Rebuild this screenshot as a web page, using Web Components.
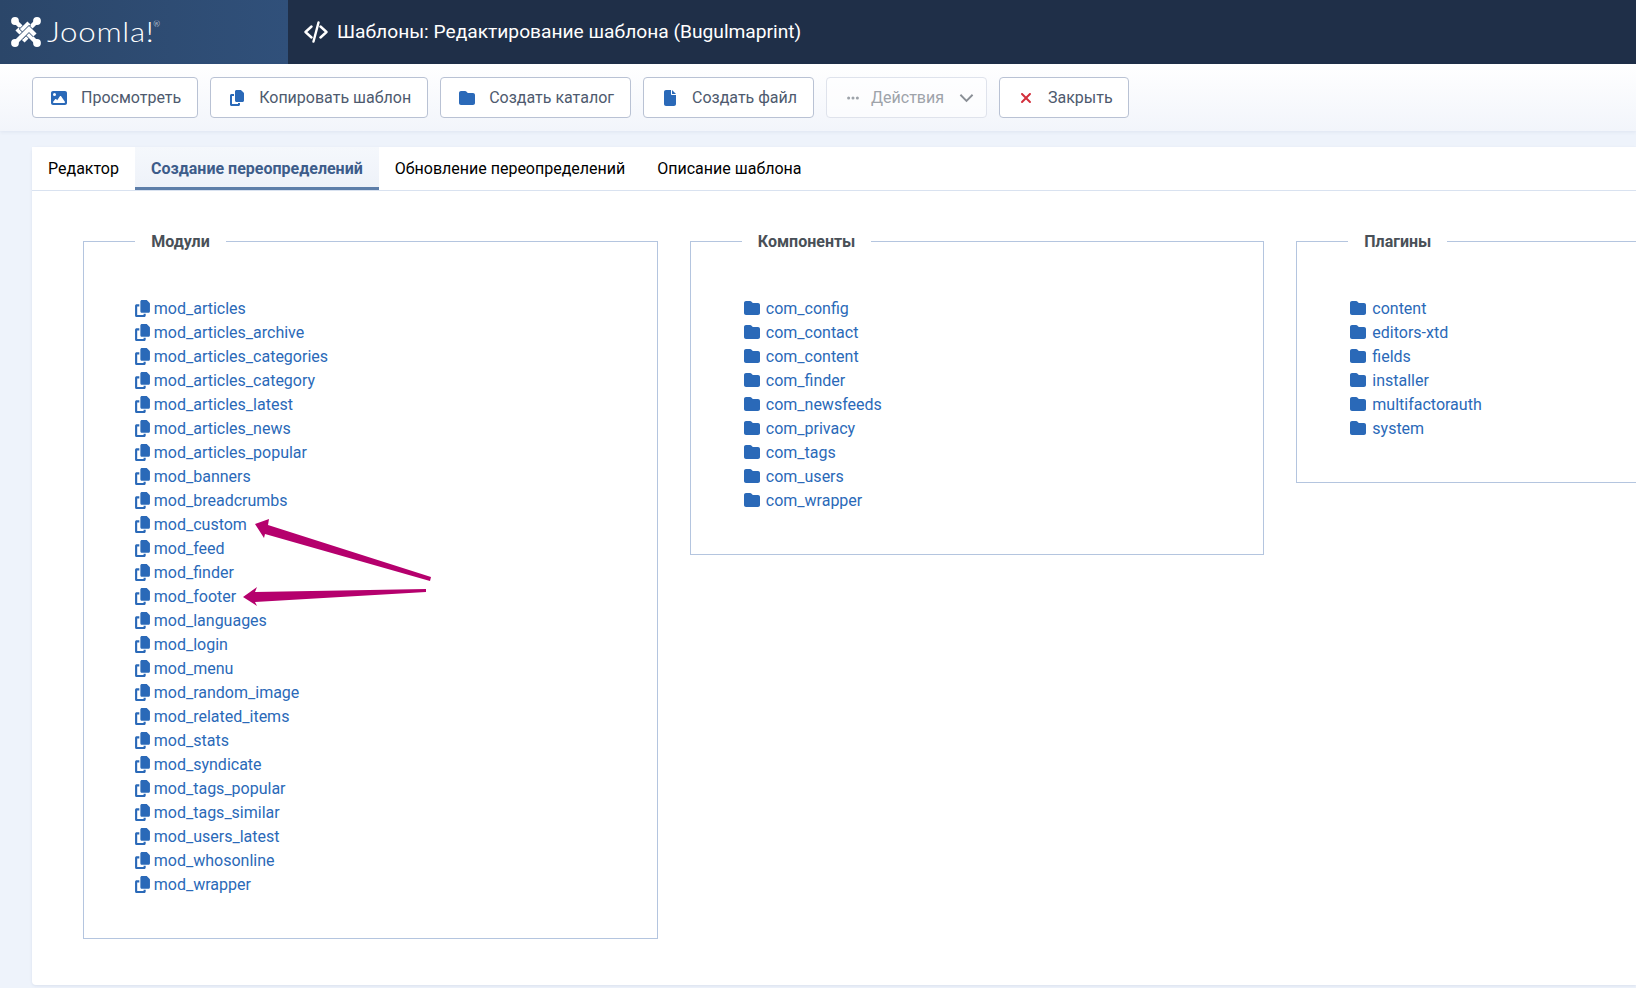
<!DOCTYPE html>
<html lang="ru">
<head>
<meta charset="utf-8">
<title>Шаблоны: Редактирование шаблона (Bugulmaprint)</title>
<style>
  html, body { margin: 0; height: 100%; overflow: hidden; }
  body { background: #eef3fb; font: 16px/24px Roboto, "Noto Sans", sans-serif; position: relative; }
</style>
</head>
<body>
<template-page></template-page>

<script>
const ICONS = {
  image: ['0 0 512 512', 'M0 96C0 60.7 28.7 32 64 32H448c35.3 0 64 28.7 64 64V416c0 35.3-28.7 64-64 64H64c-35.3 0-64-28.7-64-64V96zM323.8 202.5c-4.5-6.6-11.9-10.5-19.8-10.5s-15.4 3.9-19.8 10.5l-87 127.6L170.7 297c-4.6-5.7-11.5-9-18.7-9s-14.2 3.3-18.7 9l-64 80c-5.8 7.2-6.9 17.1-2.9 25.4s12.4 13.6 21.6 13.6h96 32H424c8.9 0 17.1-4.9 21.2-12.8s3.6-17.4-1.4-24.7l-120-176zM112 192a48 48 0 1 0 0-96 48 48 0 1 0 0 96z'],
  copy: ['0 0 448 512', 'M208 0H332.1c12.7 0 24.9 5.1 33.9 14.1l67.9 67.9c9 9 14.1 21.2 14.1 33.9V336c0 26.5-21.5 48-48 48H208c-26.5 0-48-21.5-48-48V48c0-26.5 21.5-48 48-48zM48 128h80v64H64V448H256V416h64v48c0 26.5-21.5 48-48 48H48c-26.5 0-48-21.5-48-48V176c0-26.5 21.5-48 48-48z'],
  folder: ['0 0 512 512', 'M64 480H448c35.3 0 64-28.7 64-64V160c0-35.3-28.7-64-64-64H288c-10.1 0-19.6-4.7-25.6-12.8L243.2 57.6C231.1 41.5 212.1 32 192 32H64C28.7 32 0 60.7 0 96V416c0 35.3 28.7 64 64 64z'],
  file: ['0 0 384 512', 'M0 64C0 28.7 28.7 0 64 0H224V128c0 17.7 14.3 32 32 32H384V448c0 35.3-28.7 64-64 64H64c-35.3 0-64-28.7-64-64V64zm384 64H256V0L384 128z'],
  close: ['0 0 384 512', 'M342.6 150.6c12.5-12.5 12.5-32.8 0-45.3s-32.8-12.5-45.3 0L192 210.7 86.6 105.4c-12.5-12.5-32.8-12.5-45.3 0s-12.5 32.8 0 45.3L146.7 256 41.4 361.4c-12.5 12.5-12.5 32.8 0 45.3s32.8 12.5 45.3 0L192 301.3 297.4 406.6c12.5 12.5 32.8 12.5 45.3 0s12.5-32.8 0-45.3L237.3 256 342.6 150.6z'],
  dots: ['0 0 448 512', 'M8 256a56 56 0 1 1 112 0A56 56 0 1 1 8 256zm160 0a56 56 0 1 1 112 0A56 56 0 1 1 168 256zm216-56a56 56 0 1 1 0 112 56 56 0 1 1 0-112z']
};

function icon(name, w, h) {
  const [box, d] = ICONS[name];
  return `<svg viewBox="${box}" width="${w}" height="${h || w}" fill="currentColor"><path d="${d}"/></svg>`;
}

class AppHeader extends HTMLElement {
  constructor() {
    super();
    const arm = 'M4 4L18 18L12 24';
    const rot = [0, 90, 180, 270].map(a => `
      <g transform="rotate(${a} 15 15)">
        <path d="${arm}" fill="none" stroke="#2d4a6f" stroke-width="5.800"/>
        <path d="${arm}" fill="none" stroke="#fff" stroke-width="4.400"/>
        <circle cx="4" cy="4" r="3.900" fill="#fff"/>
      </g>`).join('');
    this.attachShadow({mode: 'open'}).innerHTML = `
      <style>
        :host { display: flex; height: 64px; background: #1f2f48; color: #fff; }
        .logo { width: 288px; display: flex; align-items: center; padding-left: 11px; box-sizing: border-box;
                background: linear-gradient(90deg, #2b4669, #30507a); }
        .word { font: 300 27px/30px Lato, sans-serif; letter-spacing: .6px; margin-left: 6px;
                display: inline-block; transform: scaleX(1.16); transform-origin: left center; }
        .word sup { font-size: 7px; line-height: 0; vertical-align: 15px; letter-spacing: 0; margin-left: -1px; }
        .title { display: flex; align-items: center; padding-left: 16px; font-size: 19.200px; gap: 9px; }
      </style>
      <div class="logo">
        <svg viewBox="0 0 30 30" width="30" height="30">${rot}</svg>
        <span class="word">Joomla!<sup>®</sup></span>
      </div>
      <div class="title">
        <svg viewBox="0 0 24 24" width="24" height="24" fill="none" stroke="#fff" stroke-width="2.400" stroke-linecap="round" stroke-linejoin="round">
          <path d="M7.500 6.500L1.500 12l6 5.500M16.500 6.500l6 5.500-6 5.500M14.500 2.500L9.500 21.500"/>
        </svg>
        <slot></slot>
      </div>
    `;
  }
}

class ToolBar extends HTMLElement {
  constructor() {
    super();
    this.attachShadow({mode: 'open'}).innerHTML = `
      <style>
        :host { display: flex; gap: 12px; height: 67px; box-sizing: border-box; padding: 13px 32px 0;
                background: linear-gradient(180deg, #fff, #f2f5fb); box-shadow: 0 1px 4px rgba(40, 70, 120, .08);
                position: relative; }
      </style>
      <slot></slot>
    `;
  }
}

class ToolButton extends HTMLElement {
  constructor() {
    super();
    const name = this.getAttribute('icon');
    const color = this.getAttribute('color');
    const off = this.hasAttribute('disabled');
    const chevron = off ? `
      <svg class="chev" viewBox="0 0 16 10" width="15" height="10" fill="none" stroke="currentColor" stroke-width="2"><path d="M1.500 1.500L8 8l6.500-6.500"/></svg>` : '';
    this.attachShadow({mode: 'open'}).innerHTML = `
      <style>
        :host { display: inline-flex; align-items: center; height: 41px; box-sizing: border-box;
                padding: 0 ${off ? 12 : color ? 15 : 16}px 0 16px; background: ${off ? 'rgba(255,255,255,.6)' : '#fff'};
                border: 1px solid ${off ? '#dfe3ec' : '#b9c2d4'};
                border-radius: 4px; color: ${off ? '#9ea3aa' : '#4e5a6e'}; white-space: nowrap; }
        .ico { width: 20px; margin-right: ${off ? 8 : 12}px; display: flex; justify-content: center; color: ${off ? '#9ea3aa' : color || '#2a69b8'}; }
        .chev { margin-left: 15px; color: #8a8f96; }
        svg { display: block; }
      </style>
      <span class="ico">${icon(name, off ? 14 : 16)}</span><slot></slot>${chevron}
    `;
  }
}

class TabBar extends HTMLElement {
  constructor() {
    super();
    this.attachShadow({mode: 'open'}).innerHTML = `
      <style>
        :host { display: flex; height: 44px; box-sizing: border-box; border-bottom: 1px solid #d9e2f0; background: #fff; }
      </style>
      <slot></slot>
    `;
  }
}

class TabItem extends HTMLElement {
  constructor() {
    super();
    const on = this.hasAttribute('active');
    this.attachShadow({mode: 'open'}).innerHTML = `
      <style>
        :host { display: flex; align-items: center; padding: 0 16px; height: 43px; box-sizing: border-box; color: #000;
                ${on ? 'color: #3d5c8a; font-weight: 700; background: linear-gradient(180deg, #f5f8fc, #eef2f9); border-bottom: 3px solid #5d7ea9; padding-top: 3px;' : ''} }
      </style>
      <slot></slot>
    `;
  }
}

class OverrideGroup extends HTMLElement {
  constructor() {
    super();
    const name = this.getAttribute('icon');
    const copy = name === 'copy';
    const rows = this.getAttribute('items').split(' ').map(t =>
      `<li>${copy ? icon(name, 15, 17) : icon(name, 16)}<a>${t}</a></li>`).join('');
    this.attachShadow({mode: 'open'}).innerHTML = `
      <style>
        :host { display: block; }
        fieldset { margin: 0; padding: 43px 0 41px 50px; border: 1px solid #b4c5df; min-width: 0; }
        legend { margin-left: 1px; padding: 2px 16px 0; font-weight: 700; color: #495057; line-height: 24px; }
        ul { list-style: none; margin: 0; padding: 0; }
        li { display: flex; align-items: center; height: 24px; gap: ${copy ? 3.5 : 6}px; color: #2a69b8; margin-left: ${copy ? 1 : 3}px; }
        svg { display: block; flex: none; margin-bottom: 2px; }
        a { color: inherit; }
      </style>
      <fieldset>
        <legend>${this.getAttribute('legend')}</legend>
        <ul>${rows}</ul>
      </fieldset>
    `;
  }
}

class CalloutArrows extends HTMLElement {
  constructor() {
    super();
    this.attachShadow({mode: 'open'}).innerHTML = `
      <style>
        :host { position: absolute; left: 0; top: 0; pointer-events: none; }
        svg { display: block; }
      </style>
      <svg width="1636" height="988" fill="#b5006d">
        <polygon points="255,524 269,519 268,525 431,577 430,581 265,534 264,538"/>
        <polygon points="243,597 257,587 255,592 426,589 426,592 255,602 257,606"/>
      </svg>
    `;
  }
}

class TemplatePage extends HTMLElement {
  constructor() {
    super();
    this.attachShadow({mode: 'open'}).innerHTML = `
      <style>
        :host { display: block; }
        main { padding: 16px 0 0 32px; }
        .card { background: #fff; height: 838px; box-shadow: 0 1px 3px rgba(40, 70, 120, .1); border-radius: 4px 0 0 4px; }
        .cols { display: grid; grid-template-columns: repeat(3, 574.500px); gap: 32px; align-items: start; padding: 37px 0 0 51.300px; }
      </style>
      <app-header>Шаблоны: Редактирование шаблона (Bugulmaprint)</app-header>
      <tool-bar>
        <tool-button icon="image">Просмотреть</tool-button>
        <tool-button icon="copy">Копировать шаблон</tool-button>
        <tool-button icon="folder">Создать каталог</tool-button>
        <tool-button icon="file">Создать файл</tool-button>
        <tool-button icon="dots" disabled>Действия</tool-button>
        <tool-button icon="close" color="#d32f3c">Закрыть</tool-button>
      </tool-bar>
      <main>
        <div class="card">
          <tab-bar>
            <tab-item>Редактор</tab-item>
            <tab-item active>Создание переопределений</tab-item>
            <tab-item>Обновление переопределений</tab-item>
            <tab-item>Описание шаблона</tab-item>
          </tab-bar>
          <div class="cols">
            <override-group legend="Модули" icon="copy" items="mod_articles mod_articles_archive mod_articles_categories mod_articles_category mod_articles_latest mod_articles_news mod_articles_popular mod_banners mod_breadcrumbs mod_custom mod_feed mod_finder mod_footer mod_languages mod_login mod_menu mod_random_image mod_related_items mod_stats mod_syndicate mod_tags_popular mod_tags_similar mod_users_latest mod_whosonline mod_wrapper"></override-group>
            <override-group legend="Компоненты" icon="folder" items="com_config com_contact com_content com_finder com_newsfeeds com_privacy com_tags com_users com_wrapper"></override-group>
            <override-group legend="Плагины" icon="folder" items="content editors-xtd fields installer multifactorauth system"></override-group>
          </div>
        </div>
      </main>
      <callout-arrows></callout-arrows>
    `;
  }
}

customElements.define('app-header', AppHeader);
customElements.define('tool-bar', ToolBar);
customElements.define('tool-button', ToolButton);
customElements.define('tab-bar', TabBar);
customElements.define('tab-item', TabItem);
customElements.define('override-group', OverrideGroup);
customElements.define('callout-arrows', CalloutArrows);
customElements.define('template-page', TemplatePage);
</script>
</body>
</html>
